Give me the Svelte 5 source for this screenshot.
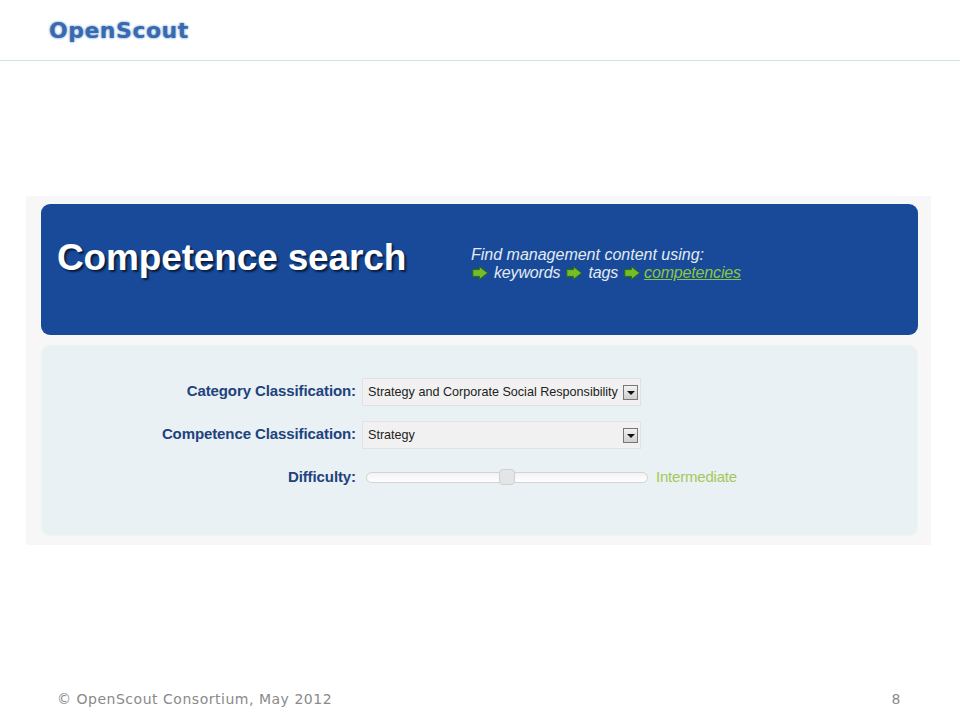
<script>
  const links = [
    { label: 'keywords', active: false },
    { label: 'tags', active: false },
    { label: 'competencies', active: true }
  ];
</script>

<div class="slide">
  <header class="top">
    <span class="logo">OpenScout</span>
  </header>

  <main class="stage">
    <section class="shot">
      <div class="hero">
        <h1>Competence search</h1>
        <div class="intro">
          <p>Find management content using:</p>
          <div class="links">
            {#each links as link}
              <svg class="arrow" viewBox="0 0 16 14" width="16" height="14" aria-hidden="true">
                <path d="M.8 3.6H7.4V.6L15.6 7L7.4 13.4V10.4H.8Z" fill="#74bd28" stroke="#2c6a14" stroke-width="1" stroke-linejoin="round" />
              </svg>
              <span class:active={link.active}>{link.label}</span>
            {/each}
          </div>
        </div>
      </div>

      <div class="form">
        <div class="row">
          <span class="label">Category Classification:</span>
          <div class="select">
            <span>Strategy and Corporate Social Responsibility</span>
            <span class="caret"></span>
          </div>
        </div>
        <div class="row">
          <span class="label">Competence Classification:</span>
          <div class="select">
            <span>Strategy</span>
            <span class="caret"></span>
          </div>
        </div>
        <div class="row slider-row">
          <span class="label">Difficulty:</span>
          <div class="track"><span class="thumb"></span></div>
          <span class="level">Intermediate</span>
        </div>
      </div>
    </section>
  </main>

  <footer class="foot">
    <span>© OpenScout Consortium, May 2012</span>
    <span>8</span>
  </footer>
</div>

<style>
  :global(body) {
    margin: 0;
    background: #fff;
  }
  .slide {
    width: 960px;
    height: 720px;
    display: flex;
    flex-direction: column;
    overflow: hidden;
    font-family: "Liberation Sans", Arial, sans-serif;
  }
  .top {
    height: 60px;
    flex: none;
    border-bottom: 1px solid #cfe2e6;
    padding-left: 49px;
    display: flex;
    align-items: flex-start;
  }
  .logo {
    margin-top: 15px;
    font-family: "DejaVu Sans", Verdana, sans-serif;
    font-weight: 700;
    font-size: 22px;
    line-height: 32px;
    letter-spacing: 0.5px;
    color: #3a69ad;
    text-shadow: 0 0 2px #7fa8d8, 0 0 3px #a9c6e6;
  }
  .stage {
    flex: 1;
    padding: 135px 29px 0 26px;
  }
  .shot {
    height: 349px;
    box-sizing: border-box;
    padding: 8px 13px 9px 15px;
    background: #f7f7f7;
    display: flex;
    flex-direction: column;
    gap: 10px;
  }
  .hero {
    height: 131px;
    flex: none;
    border-radius: 9px;
    background: #184a99;
    display: flex;
    align-items: flex-start;
    padding: 33px 0 0 16px;
    box-sizing: border-box;
  }
  h1 {
    margin: 0;
    width: 414px;
    flex: none;
    font-size: 37px;
    line-height: 42px;
    font-weight: 700;
    letter-spacing: -0.15px;
    color: #fff;
    text-shadow: 2px 2px 2px #0a1c3c;
  }
  .intro {
    margin-top: 9px;
    color: #e4eaf3;
    font-size: 16px;
    font-style: italic;
    line-height: 18px;
  }
  .intro p {
    margin: 0;
  }
  .links {
    display: flex;
    align-items: center;
    padding-left: 1px;
    gap: 6px;
    letter-spacing: -0.15px;
  }
  .arrow {
    flex: none;
  }
  .links .active {
    color: #8cc63f;
    text-decoration: underline;
    margin-left: -2px;
  }
  .form {
    flex: 1;
    border-radius: 9px;
    background: #e9f1f4;
    border: 1px solid #eef3f5;
    box-sizing: border-box;
    padding: 32px 0 0 0;
  }
  .row {
    display: flex;
    align-items: center;
    height: 28px;
    margin-bottom: 15px;
  }
  .label {
    width: 314px;
    padding-bottom: 4px;
    text-align: right;
    font-size: 15px;
    font-weight: 700;
    color: #21427c;
    letter-spacing: -0.1px;
  }
  .select {
    margin-left: 6px;
    width: 279px;
    height: 28px;
    box-sizing: border-box;
    border: 1px solid #dfe3e4;
    background: #f1f1f1;
    display: flex;
    align-items: center;
    justify-content: space-between;
    padding: 0 2px 0 5px;
    font-size: 12.6px;
    color: #222;
  }
  .caret {
    width: 15px;
    height: 15px;
    box-sizing: border-box;
    border: 1px solid #777;
    background: linear-gradient(#f2f2f2, #cfcfcf);
    position: relative;
  }
  .caret::after {
    content: "";
    position: absolute;
    left: 3px;
    top: 5px;
    border-left: 4px solid transparent;
    border-right: 4px solid transparent;
    border-top: 4px solid #111;
  }
  .slider-row .track {
    margin-left: 10px;
    width: 282px;
    height: 11px;
    margin-bottom: 1px;
    box-sizing: border-box;
    border: 1px solid #cfd4d6;
    border-radius: 6px;
    background: linear-gradient(#f2f2f2, #fff);
    position: relative;
  }
  .thumb {
    position: absolute;
    left: 132px;
    top: -4px;
    width: 16px;
    height: 16px;
    box-sizing: border-box;
    border: 1px solid #ccd2d4;
    border-radius: 4px;
    background: #e3e5e6;
  }
  .level {
    margin-left: 8px;
    padding-bottom: 4px;
    font-size: 15px;
    letter-spacing: -0.2px;
    color: #a3c85a;
  }
  .foot {
    height: 39px;
    flex: none;
    display: flex;
    justify-content: space-between;
    padding: 0 59px 1px 57px;
    font-family: "DejaVu Sans", Verdana, sans-serif;
    font-size: 14px;
    line-height: 38px;
    letter-spacing: 0.52px;
    color: #8a8a8a;
  }
</style>
